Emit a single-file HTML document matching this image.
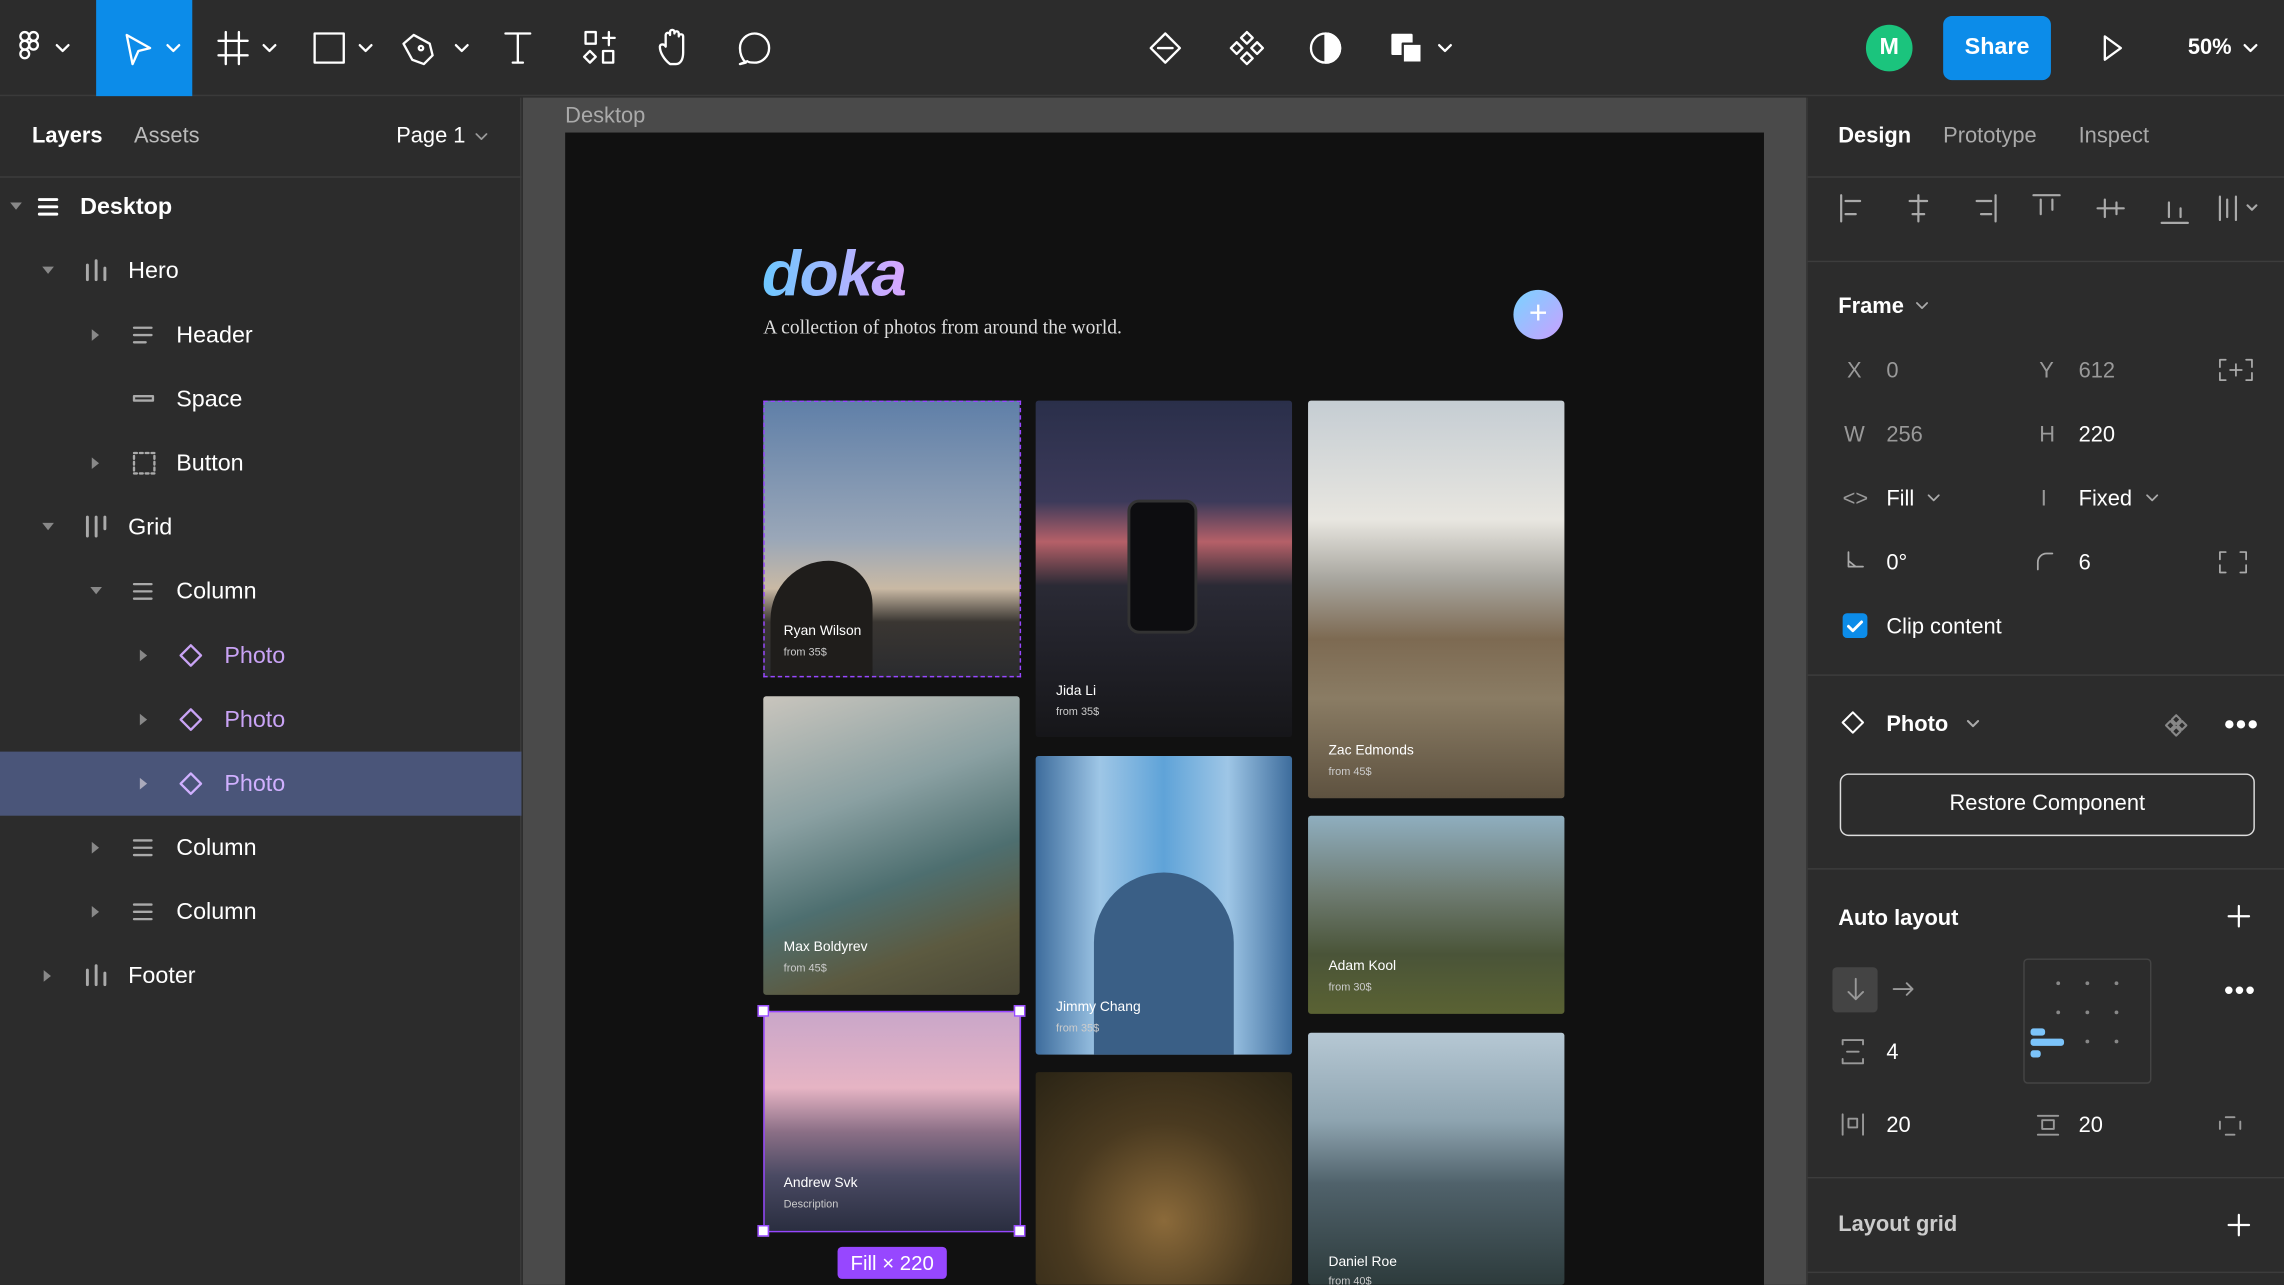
<!DOCTYPE html>
<html><head><meta charset="utf-8"><style>
*{box-sizing:border-box;margin:0;padding:0}
html,body{width:2284px;height:1285px;overflow:hidden;background:#2c2c2c}
#w{width:1568px;height:882px;transform:scale(1.45663);transform-origin:0 0;position:relative;font-family:"Liberation Sans",sans-serif;color:#fff;font-size:15px}
.a{position:absolute}
#top{left:0;top:0;width:1568px;height:66px;background:#2c2c2c;border-bottom:1px solid #3a3a3a}
#left{left:0;top:67px;width:358px;height:815px;background:#2c2c2c;border-right:1px solid #3a3a3a}
#right{left:1240px;top:67px;width:328px;height:815px;background:#2c2c2c;border-left:1px solid #3a3a3a}
#canvas{left:359px;top:67px;width:881px;height:815px;background:#4a4a4a}
svg{position:absolute;overflow:visible;left:0;top:0}
.ic{fill:none;stroke:#fff;stroke-width:1.6;stroke-linecap:round;stroke-linejoin:round}
.row{position:absolute;left:0;width:358px;height:44px;font-size:16px}
.row span{position:absolute;top:13px}
.tri{position:absolute;top:18px;width:0;height:0;border-left:4px solid transparent;border-right:4px solid transparent;border-top:5px solid #888}
.trr{position:absolute;top:17px;width:0;height:0;border-top:4px solid transparent;border-bottom:4px solid transparent;border-left:5px solid #888}
.lb{color:#999}
.sep{position:absolute;left:0;width:328px;height:1px;background:#3d3d3d}
.ph{position:absolute;overflow:hidden;border-radius:2px}
.ph b{position:absolute;left:14px;font-size:9.5px;font-weight:normal;color:#fff}
.ph i{position:absolute;left:14px;font-size:7.5px;font-style:normal;color:#ccc}
</style></head><body><div id="w">
<div id="top" class="a">
 <div class="a" style="left:66px;top:0;width:66px;height:66px;background:#0c8ce9"></div>
 <svg class="ic" width="1568" height="66">
  <g transform="translate(14,22)"><rect x="0" y="0" width="6" height="6" rx="3"/><rect x="6" y="0" width="6" height="6" rx="3"/><rect x="0" y="6" width="6" height="6" rx="3"/><circle cx="9" cy="9" r="3"/><rect x="0" y="12" width="6" height="6" rx="3"/></g>
  <path d="M39 31l4 4 4-4"/>
  <path d="M87 24l16 9-8 2-4 9z"/><path d="M115 31l4 4 4-4"/>
  <path d="M155 22v22M164 22v22M150 28h20M150 38h20"/><path d="M181 31l4 4 4-4"/>
  <rect x="216" y="23" width="20" height="20"/><path d="M247 31l4 4 4-4"/>
  <path d="M284 24l11 6 2 8-6 6-8-3-6-11z"/><circle cx="289" cy="33" r="1.5"/><path d="M313 31l4 4 4-4"/>
  <path d="M347 23h17M355.5 23v20M352 43h7"/>
  <rect x="402" y="22" width="7" height="8"/><path d="M418 22v9M414 26h8"/><path d="M405 35l4 4-4 4-4-4z"/><rect x="414" y="35" width="7" height="8"/>
  <path d="M460 44c-4-3-7-8-7-12 0-2 3-2 4 0v-8c0-2 3-2 3 0v-2c0-2 3-2 3 0v1c0-2 3-2 3 0v2c0-2 3-2 3 0v11c0 5-2 8-5 8z"/>
  <path d="M512 43c-3-3-4-6-4-10 0-6 5-10 10-10s10 4 10 10-5 10-10 10c-2 0-4 0-5-1l-5 2z"/>
  <path d="M790 33l10-10 10 10-10 10zM795 33h10"/>
  <path d="M856 22l4 4-4 4-4-4zM856 36l4 4-4 4-4-4zM849 29l4 4-4 4-4-4zM863 29l4 4-4 4-4-4z"/>
  <circle cx="910" cy="33" r="10"/><path d="M910 23a10 10 0 0 1 0 20z" fill="#fff"/>
  <rect x="956" y="24" width="13" height="13" fill="#fff"/><rect x="963" y="30" width="13" height="13" fill="#fff" stroke="#2c2c2c"/><path d="M988 31l4 4 4-4"/>
  <path d="M1445 25l11 8-11 8z"/><path d="M1541 31l4 4 4-4"/>
 </svg>
 <div class="a" style="left:1281px;top:17px;width:32px;height:32px;border-radius:16px;background:#1bc47d;text-align:center;line-height:32px;font-size:16px;font-weight:bold">M</div>
 <div class="a" style="left:1334px;top:11px;width:74px;height:44px;border-radius:6px;background:#0c8ce9;text-align:center;line-height:44px;font-size:16px;font-weight:bold">Share</div>
 <div class="a" style="left:1502px;top:24px;font-size:15px;font-weight:bold">50%</div>
</div>
<div id="left" class="a">
 <div class="a" style="left:22px;top:18px;font-size:15px;font-weight:bold">Layers</div>
 <div class="a lb" style="left:92px;top:18px;font-size:15px;color:#bbb">Assets</div>
 <div class="a" style="left:272px;top:18px;font-size:15px">Page 1</div>
 <svg class="ic" style="stroke:#999;stroke-width:1.2"><path d="M327 25l3.5 3.5 3.5-3.5"/></svg>
 <div class="a" style="left:0;top:54px;width:358px;height:1px;background:#3d3d3d"></div>
</div>
<div class="a" style="left:0;top:516px;width:358px;height:44px;background:#4a5579"></div>
<div class="row" style="top:121px"><i class="tri" style="left:7px"></i><svg class="ic" style="stroke-width:2"><path d="M27 16h12M27 21h12M27 26h12"/></svg><span style="left:55px;font-weight:bold">Desktop</span></div>
<div class="row" style="top:165px"><i class="tri" style="left:29px"></i><svg class="ic" style="stroke:#aaa;stroke-width:2"><path d="M60 17v10M66 14v13M72 19v8"/></svg><span style="left:88px">Hero</span></div>
<div class="row" style="top:209px"><i class="trr" style="left:63px"></i><svg class="ic" style="stroke:#aaa;stroke-width:1.6"><path d="M92 16h12M92 21h12M92 26h8"/></svg><span style="left:121px">Header</span></div>
<div class="row" style="top:253px"><svg class="ic" style="stroke:#aaa"><rect x="92" y="19" width="13" height="3"/></svg><span style="left:121px">Space</span></div>
<div class="row" style="top:297px"><i class="trr" style="left:63px"></i><svg class="ic" style="stroke:#aaa;stroke-dasharray:2 2"><rect x="92" y="14" width="14" height="14"/></svg><span style="left:121px">Button</span></div>
<div class="row" style="top:341px"><i class="tri" style="left:29px"></i><svg class="ic" style="stroke:#aaa;stroke-width:2"><path d="M60 14v13M66 14v13M72 14v8"/></svg><span style="left:88px">Grid</span></div>
<div class="row" style="top:385px"><i class="tri" style="left:62px"></i><svg class="ic" style="stroke:#aaa"><path d="M92 16h12M92 21h12M92 26h12"/></svg><span style="left:121px">Column</span></div>
<div class="row" style="top:429px"><i class="trr" style="left:96px"></i><svg class="ic" style="stroke:#c9a3f5"><path d="M131 14l7 7-7 7-7-7z"/></svg><span style="left:154px;color:#c9a3f5">Photo</span></div>
<div class="row" style="top:473px"><i class="trr" style="left:96px"></i><svg class="ic" style="stroke:#c9a3f5"><path d="M131 14l7 7-7 7-7-7z"/></svg><span style="left:154px;color:#c9a3f5">Photo</span></div>
<div class="row" style="top:517px"><i class="trr" style="left:96px;border-left-color:#aab"></i><svg class="ic" style="stroke:#d0b0ff"><path d="M131 14l7 7-7 7-7-7z"/></svg><span style="left:154px;color:#d0b0ff">Photo</span></div>
<div class="row" style="top:561px"><i class="trr" style="left:63px"></i><svg class="ic" style="stroke:#aaa"><path d="M92 16h12M92 21h12M92 26h12"/></svg><span style="left:121px">Column</span></div>
<div class="row" style="top:605px"><i class="trr" style="left:63px"></i><svg class="ic" style="stroke:#aaa"><path d="M92 16h12M92 21h12M92 26h12"/></svg><span style="left:121px">Column</span></div>
<div class="row" style="top:649px"><i class="trr" style="left:30px"></i><svg class="ic" style="stroke:#aaa;stroke-width:2"><path d="M60 17v10M66 14v13M72 19v8"/></svg><span style="left:88px">Footer</span></div>

<div id="canvas" class="a">
 <div class="a" style="left:29px;top:4px;color:#aaa;font-size:15px">Desktop</div>
 <div class="a" style="left:29px;top:24px;width:823px;height:800px;background:#111"></div>
</div>
<div class="a" style="left:523px;top:164px;font-size:44px;font-weight:bold;font-style:italic;letter-spacing:-1px;background:linear-gradient(90deg,#6cc8ff,#d9a6ff);-webkit-background-clip:text;color:transparent">doka</div>
<div class="a" style="left:524px;top:217px;font-family:'Liberation Serif',serif;font-size:13.4px;color:#ddd">A collection of photos from around the world.</div>
<div class="a" style="left:1039px;top:199px;width:34px;height:34px;border-radius:17px;background:linear-gradient(135deg,#79d3ff,#c9a0ff);text-align:center;line-height:32px;font-size:22px">+</div>

<div class="ph" style="left:524px;top:275px;width:176px;height:190px;background:linear-gradient(180deg,#5f7fa8 0%,#9aa7b8 50%,#c9b9a4 68%,#3a3632 80%,#2a2b2e 100%)"><div class="a" style="left:5px;top:110px;width:70px;height:80px;background:#1f1d1b;border-radius:40px 30px 0 0"></div><b style="top:153px">Ryan Wilson</b><i style="top:168px">from 35$</i></div>
<div class="ph" style="left:524px;top:478px;width:176px;height:205px;background:linear-gradient(160deg,#c9c5bd 0%,#8aa0a2 35%,#4e6f70 60%,#5c5a40 80%,#4a4735 100%)"><b style="top:167px">Max Boldyrev</b><i style="top:182px">from 45$</i></div>
<div class="ph" style="left:524px;top:694px;width:176px;height:151px;background:linear-gradient(180deg,#c9a6c9 0%,#e6b4c4 35%,#8b6f86 55%,#4a4a63 75%,#2a2e40 100%)"><b style="top:113px">Andrew Svk</b><i style="top:128px">Description</i></div>
<div class="a" style="left:524px;top:694px;width:177px;height:152px;border:1.5px solid #9747ff"></div>
<div class="a" style="left:524px;top:275px;width:177px;height:190px;border:1px dashed #9747ff"></div>
<div class="a" style="left:520px;top:690px;width:8px;height:8px;background:#fff;border:1.5px solid #9747ff"></div>
<div class="a" style="left:696px;top:690px;width:8px;height:8px;background:#fff;border:1.5px solid #9747ff"></div>
<div class="a" style="left:520px;top:841px;width:8px;height:8px;background:#fff;border:1.5px solid #9747ff"></div>
<div class="a" style="left:696px;top:841px;width:8px;height:8px;background:#fff;border:1.5px solid #9747ff"></div>
<div class="a" style="left:575px;top:856px;width:75px;height:22px;background:#9747ff;border-radius:3px;text-align:center;line-height:22px;font-size:14px">Fill × 220</div>

<div class="ph" style="left:711px;top:275px;width:176px;height:231px;background:linear-gradient(180deg,#2a2f4a 0%,#3c3a5a 30%,#b56068 42%,#2a2a35 55%,#161619 100%)"><div class="a" style="left:63px;top:68px;width:48px;height:92px;border-radius:8px;background:#0d0d10;border:2px solid #333"></div><b style="top:194px">Jida Li</b><i style="top:209px">from 35$</i></div>
<div class="ph" style="left:711px;top:519px;width:176px;height:205px;background:linear-gradient(90deg,#3d6c9c 0%,#9ec6e6 25%,#5fa3d8 50%,#9ec6e6 75%,#3d6c9c 100%)"><div class="a" style="left:40px;top:80px;width:96px;height:140px;border-radius:48px 48px 0 0;background:#3a5f86"></div><b style="top:167px">Jimmy Chang</b><i style="top:182px">from 35$</i></div>
<div class="ph" style="left:711px;top:736px;width:176px;height:146px;background:radial-gradient(circle at 50% 70%,#8b6a3a,#4a3a20 50%,#2a2415 100%)"></div>

<div class="ph" style="left:898px;top:275px;width:176px;height:273px;background:linear-gradient(180deg,#c5cdd3 0%,#e8e6e0 30%,#a7a59e 45%,#7d6a52 60%,#8a7c64 75%,#5e5240 100%)"><b style="top:235px">Zac Edmonds</b><i style="top:250px">from 45$</i></div>
<div class="ph" style="left:898px;top:560px;width:176px;height:136px;background:linear-gradient(180deg,#8faebf 0%,#6d7a6f 40%,#4a5438 70%,#5a6233 100%)"><b style="top:98px">Adam Kool</b><i style="top:113px">from 30$</i></div>
<div class="ph" style="left:898px;top:709px;width:176px;height:173px;background:linear-gradient(180deg,#b6c8d4 0%,#8ea4b0 35%,#50626b 60%,#2d3b3c 100%)"><b style="top:152px">Daniel Roe</b><i style="top:166px">from 40$</i></div>

<div id="right" class="a">
 <div class="a" style="left:21px;top:18px;font-weight:bold;font-size:15px">Design</div>
 <div class="a" style="left:93px;top:18px;color:#aaa;font-size:15px">Prototype</div>
 <div class="a" style="left:186px;top:18px;color:#aaa;font-size:15px">Inspect</div>
 <div class="sep" style="top:54px"></div>
 <svg class="ic" style="stroke:#aaa;stroke-width:1.5"><path d="M23 67v18M26 71h10M26 80h7M76 67v18M70 71h12M72 80h8M129 67v18M116 71h10M119 80h7M155 67h18M160 70v10M168 70v7M199 76h18M204 70v12M212 72v8M243 86h18M248 72v10M256 76v6M283 68v16M288 70v12M294 68v16M302 74l3 3 3-3"/></svg>
 <div class="sep" style="top:112px"></div>
 <div class="a" style="left:21px;top:135px;font-weight:bold;font-size:15px">Frame</div>
 <svg class="ic" style="stroke:#aaa;stroke-width:1.2"><path d="M75 141l3.5 3.5 3.5-3.5"/></svg>
 <div class="a lb" style="left:27px;top:179px">X</div><div class="a lb" style="left:54px;top:179px">0</div>
 <div class="a lb" style="left:159px;top:179px">Y</div><div class="a lb" style="left:186px;top:179px">612</div>
 <div class="a lb" style="left:25px;top:223px">W</div><div class="a lb" style="left:54px;top:223px">256</div>
 <div class="a lb" style="left:159px;top:223px">H</div><div class="a" style="left:186px;top:223px">220</div>
 <div class="a lb" style="left:24px;top:267px">&lt;&gt;</div><div class="a" style="left:54px;top:267px">Fill</div>
 <div class="a lb" style="left:160px;top:267px">I</div><div class="a" style="left:186px;top:267px">Fixed</div>
 <svg class="ic" style="stroke:#aaa;stroke-width:1.2"><path d="M83 273l3.5 3.5 3.5-3.5M233 273l3.5 3.5 3.5-3.5"/><path d="M28 312v10h10M28 318l5 4"/><path d="M158 324v-5a6 6 0 0 1 6-6h4"/><path d="M287 312h-4v5M297 312h4v5M287 326h-4v-5M297 326h4v-5"/><path d="M287 180h-4v5M301 180h4v5M287 194h-4v-5M301 194h4v-5M290 187h8M294 183v8"/></svg>
 <div class="a" style="left:54px;top:311px">0°</div><div class="a" style="left:186px;top:311px">6</div>
 <div class="a" style="left:24px;top:354px;width:17px;height:17px;border-radius:3px;background:#0c8ce9"></div>
 <svg class="ic" style="stroke-width:2"><path d="M28 363l3 3 6-6"/></svg>
 <div class="a" style="left:54px;top:355px">Clip content</div>
 <div class="sep" style="top:396px"></div>
 <svg class="ic" style="stroke-width:1.4"><path d="M31 422l7 7-7 7-7-7z"/><path d="M110 428l3.5 3.5 3.5-3.5" style="stroke:#aaa"/><path d="M253 424l3 3-3 3-3-3zM253 432l3 3-3 3-3-3zM249 428l3 3-3 3-3-3zM257 428l3 3-3 3-3-3z" style="stroke:#888"/></svg>
 <div class="a" style="left:54px;top:422px;font-weight:bold">Photo</div>
 <div class="a" style="left:286px;top:420px;font-size:20px;letter-spacing:1px;font-weight:bold">•••</div>
 <div class="a" style="left:22px;top:464px;width:285px;height:43px;border:1.5px solid #ddd;border-radius:6px;text-align:center;line-height:40px;font-size:15px">Restore Component</div>
 <div class="sep" style="top:529px"></div>
 <div class="a" style="left:21px;top:555px;font-weight:bold;font-size:15px">Auto layout</div>
 <svg class="ic" style="stroke-width:1.5"><path d="M296 555v14M289 562h14M296 767v14M289 774h14"/></svg>
 <div class="a" style="left:17px;top:597px;width:31px;height:31px;border-radius:3px;background:#444"></div>
 <svg class="ic" style="stroke:#999;stroke-width:1.3"><path d="M33 605v14M28 614l5 5 5-5M59 612h13M68 608l4 4-4 4"/><path d="M24 647h14M24 650v-3M38 650v-3M24 663h14M24 660v3M38 660v3M27 655h8"/><path d="M24 698v14M38 698v14M28 701h6v6h-6zM158 699h14M158 712h14M161 702h8v6h-8zM287 700h6M287 712h6M283 703v5M297 703v5"/></svg>
 <div class="a" style="left:148px;top:591px;width:88px;height:86px;border:1px solid #444;border-radius:3px"></div>
 <svg style="fill:#888"><circle cx="172" cy="608" r="1.3"/><circle cx="192" cy="608" r="1.3"/><circle cx="212" cy="608" r="1.3"/><circle cx="172" cy="628" r="1.3"/><circle cx="192" cy="628" r="1.3"/><circle cx="212" cy="628" r="1.3"/><circle cx="192" cy="648" r="1.3"/><circle cx="212" cy="648" r="1.3"/></svg>
 <div class="a" style="left:153px;top:639px;width:10px;height:5px;border-radius:2px;background:#7cc4fa"></div>
 <div class="a" style="left:153px;top:646px;width:23px;height:5px;border-radius:2px;background:#7cc4fa"></div>
 <div class="a" style="left:153px;top:654px;width:7px;height:5px;border-radius:2px;background:#7cc4fa"></div>
 <div class="a" style="left:286px;top:603px;font-size:18px;letter-spacing:1px;font-weight:bold">•••</div>
 <div class="a" style="left:54px;top:647px">4</div>
 <div class="a" style="left:54px;top:697px">20</div>
 <div class="a" style="left:186px;top:697px">20</div>
 <div class="sep" style="top:741px"></div>
 <div class="a" style="left:21px;top:765px;font-weight:bold;font-size:15px;color:#ccc">Layout grid</div>
 <div class="sep" style="top:806px"></div>
</div>
</div></body></html>
